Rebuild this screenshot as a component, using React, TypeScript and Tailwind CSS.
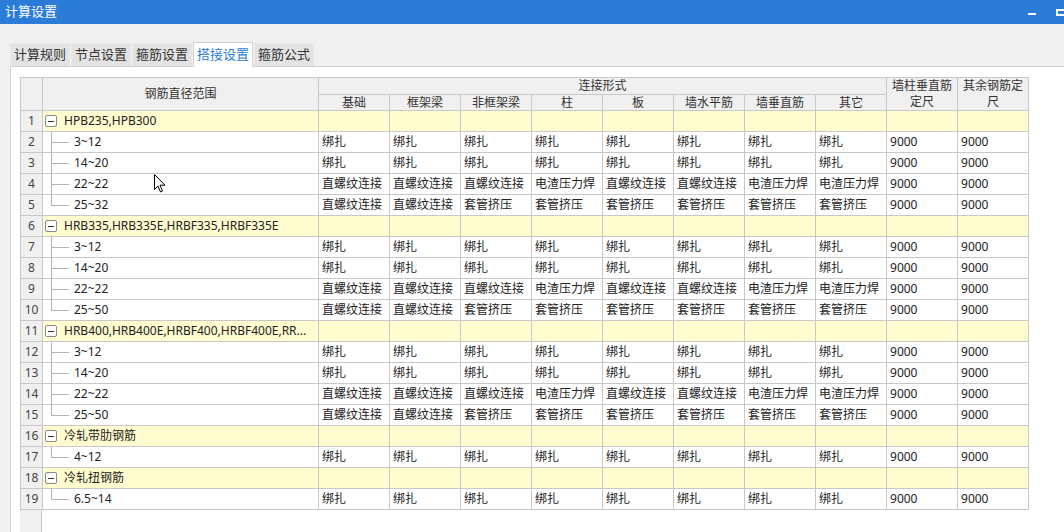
import React from 'react';

type Row =
  | { kind: 'group'; label: string }
  | { kind: 'item'; label: string; last: boolean; vals: string[] };

const A = ['绑扎', '绑扎', '绑扎', '绑扎', '绑扎', '绑扎', '绑扎', '绑扎', '9000', '9000'];
const B = ['直螺纹连接', '直螺纹连接', '直螺纹连接', '电渣压力焊', '直螺纹连接', '直螺纹连接', '电渣压力焊', '电渣压力焊', '9000', '9000'];
const C = ['直螺纹连接', '直螺纹连接', '套管挤压', '套管挤压', '套管挤压', '套管挤压', '套管挤压', '套管挤压', '9000', '9000'];

const rows: Row[] = [
  { kind: 'group', label: 'HPB235,HPB300' },
  { kind: 'item', label: '3~12', last: false, vals: A },
  { kind: 'item', label: '14~20', last: false, vals: A },
  { kind: 'item', label: '22~22', last: false, vals: B },
  { kind: 'item', label: '25~32', last: true, vals: C },
  { kind: 'group', label: 'HRB335,HRB335E,HRBF335,HRBF335E' },
  { kind: 'item', label: '3~12', last: false, vals: A },
  { kind: 'item', label: '14~20', last: false, vals: A },
  { kind: 'item', label: '22~22', last: false, vals: B },
  { kind: 'item', label: '25~50', last: true, vals: C },
  { kind: 'group', label: 'HRB400,HRB400E,HRBF400,HRBF400E,RR...' },
  { kind: 'item', label: '3~12', last: false, vals: A },
  { kind: 'item', label: '14~20', last: false, vals: A },
  { kind: 'item', label: '22~22', last: false, vals: B },
  { kind: 'item', label: '25~50', last: true, vals: C },
  { kind: 'group', label: '冷轧带肋钢筋' },
  { kind: 'item', label: '4~12', last: true, vals: A },
  { kind: 'group', label: '冷轧扭钢筋' },
  { kind: 'item', label: '6.5~14', last: true, vals: A },
];

const subHeads = ['基础', '框架梁', '非框架梁', '柱', '板', '墙水平筋', '墙垂直筋', '其它'];
const tabs = ['计算规则', '节点设置', '箍筋设置', '搭接设置', '箍筋公式'];

const font = { fontFamily: '"Noto Sans", "Noto Sans CJK SC", sans-serif' };

export default function App() {
  return (
    <div className="w-[1064px] h-[532px] overflow-hidden bg-[#f0f0f0] text-[12px] text-[#222]" style={font}>
      {/* title bar */}
      <div className="h-6 bg-[#2b7cd9] flex items-center justify-between pl-[5px] text-white text-[13px]">
        <span>计算设置</span>
        <div className="flex items-center gap-[20px]">
          <span className="block w-[8px] h-[2px] bg-white mt-[4px]" />
          <span className="block w-[8px] h-[7px] border-2 border-white border-r-0" />
        </div>
      </div>

      {/* tabs */}
      <div className="flex items-end pl-[10px] pt-[18px] gap-[1px] text-[13px]">
        {tabs.map((t, i) =>
          i === 3 ? (
            <div key={t} className="h-[25px] px-[3px] bg-white border border-[#d2d2d2] border-b-0 text-[#2b7cd9] flex items-center -mb-px relative z-10">
              {t}
            </div>
          ) : (
            <div key={t} className="h-[23px] px-[3px] bg-[#e3e3e3] border border-[#e8e8e8] border-b-0 text-[#333] flex items-center">
              {t}
            </div>
          )
        )}
      </div>

      {/* panel */}
      <div className="ml-[10px] bg-white border-l border-t border-[#d2d2d2] h-[470px] pl-[9px] pt-[10px]">
        <div className="relative">
          <div className="absolute left-0 top-0 w-[22px] h-[470px] bg-[#f0f0f0] border-r border-[#c8c8c8]" />
          <table className="relative table-fixed border-collapse w-[1008px]">
            <colgroup>
              <col className="w-[22px]" />
              <col className="w-[276px]" />
              {Array.from({ length: 10 }).map((_, i) => (
                <col key={i} className="w-[71px]" />
              ))}
            </colgroup>
            <thead>
              <tr className="h-[16px]">
                <th rowSpan={2} className="bg-[#f0f0f0] border border-[#c8c8c8] p-0" />
                <th rowSpan={2} className="bg-[#f0f0f0] border border-[#c8c8c8] p-0 font-normal text-[#333] leading-[16px]">
                  钢筋直径范围
                </th>
                <th colSpan={8} className="bg-[#f0f0f0] border border-[#c8c8c8] p-0 font-normal text-[#333] leading-[15px]">
                  连接形式
                </th>
                <th rowSpan={2} className="bg-[#f0f0f0] border border-[#c8c8c8] p-0 font-normal text-[#333] leading-[16px]">
                  墙柱垂直筋<br />定尺
                </th>
                <th rowSpan={2} className="bg-[#f0f0f0] border border-[#c8c8c8] p-0 font-normal text-[#333] leading-[16px]">
                  其余钢筋定<br />尺
                </th>
              </tr>
              <tr className="h-[16px]">
                {subHeads.map((h) => (
                  <th key={h} className="bg-[#f0f0f0] border border-[#c8c8c8] p-0 font-normal text-[#333] leading-[15px]">
                    {h}
                  </th>
                ))}
              </tr>
            </thead>
            <tbody>
              {rows.map((r, i) => {
                const group = r.kind === 'group';
                const bg = group ? 'bg-[#fffdd0]' : 'bg-white';
                return (
                  <tr key={i} className="h-[21px]">
                    <td className="bg-[#f0f0f0] border border-[#c8c8c8] text-center text-[#444] p-0">{i + 1}</td>
                    <td className={`${bg} border border-[#c8c8c8] p-0 relative`}>
                      {group ? (
                        <div className="flex items-center pl-[2px]">
                          <span className="w-[12px] h-[12px] border border-[#8a8a8a] rounded-[2px] bg-white flex items-center justify-center">
                            <span className="block w-[6px] h-px bg-[#333]" />
                          </span>
                          <span className="ml-[7px] whitespace-nowrap">{r.label}</span>
                        </div>
                      ) : (
                        <>
                          <span
                            className={`absolute left-[8px] top-0 w-px bg-[#b4b4b4] ${r.last ? 'h-[10px]' : 'h-full'}`}
                          />
                          <span className="absolute left-[8px] top-[10px] w-[18px] h-px bg-[#b4b4b4]" />
                          <span className="pl-[31px] whitespace-nowrap">{r.label}</span>
                        </>
                      )}
                    </td>
                    {group
                      ? Array.from({ length: 10 }).map((_, j) => (
                          <td key={j} className={`${bg} border border-[#c8c8c8]`} />
                        ))
                      : r.vals.map((v, j) => (
                          <td key={j} className="bg-white border border-[#c8c8c8] px-[3px] whitespace-nowrap overflow-hidden">
                            {v}
                          </td>
                        ))}
                  </tr>
                );
              })}
            </tbody>
          </table>

          {/* mouse cursor */}
          <svg className="absolute left-[134px] top-[97px]" width="12" height="19" viewBox="0 0 12 19">
            <path d="M0.5 0.5 L0.5 15.5 L4 12 L6.5 18 L8.5 17 L6 11.2 L11 11.2 Z" fill="white" stroke="black" strokeWidth="1" />
          </svg>
        </div>
      </div>
    </div>
  );
}
